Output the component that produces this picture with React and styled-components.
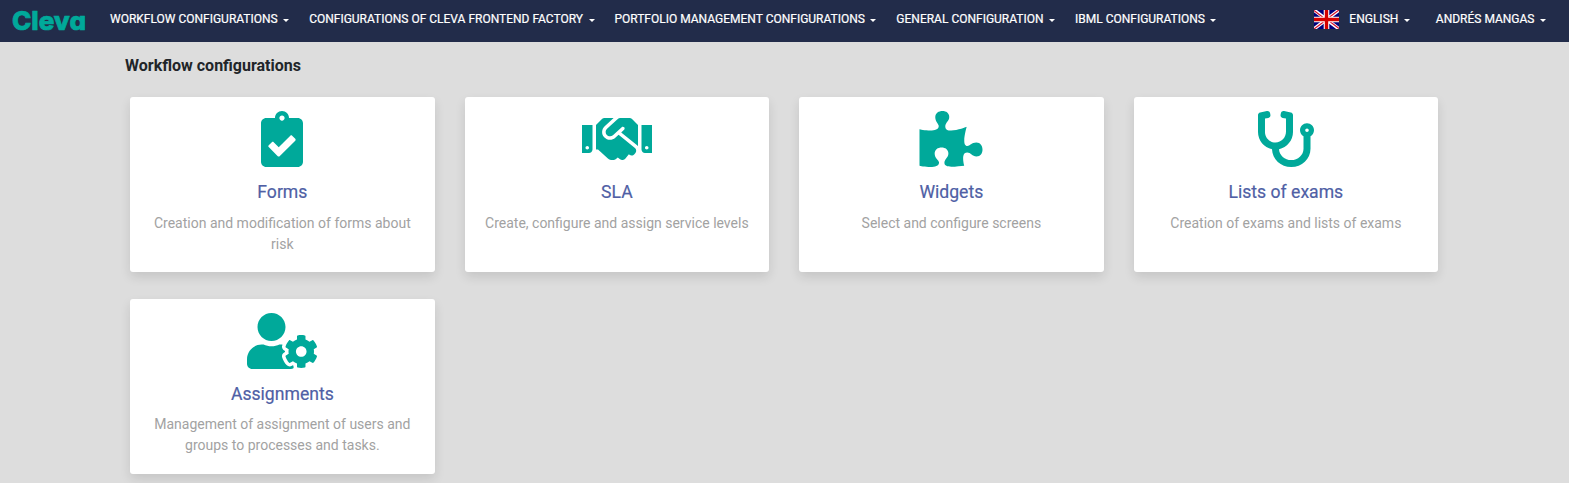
import React from "react";
import styled, { createGlobalStyle } from "styled-components";
import {
  FaClipboardCheck,
  FaHandshake,
  FaPuzzlePiece,
  FaStethoscope,
  FaUserCog,
} from "react-icons/fa";

const GlobalStyle = createGlobalStyle`
  * { box-sizing: border-box; }
  body {
    margin: 0;
    min-height: 100vh;
    background: #dddddd;
    color: #212529;
    font-family: Roboto, "Liberation Sans", sans-serif;
  }
`;

const Navbar = styled.nav`
  display: flex;
  align-items: center;
  height: 42px;
  padding: 0 23px 0 12px;
  background: #222c4a;
`;

const Logo = styled.svg`
  display: block;
  flex: none;
  width: 78px;
  height: 36px;
  margin-right: 20px;
  overflow: visible;
`;

const LogoText = styled.text`
  font-family: Inter, "Liberation Sans", sans-serif;
  font-size: 26px;
  font-weight: 800;
  font-feature-settings: "cv11";
  fill: #00a99a;
  stroke: #00a99a;
  stroke-width: 0.7px;
`;

const Menu = styled.div`
  display: flex;
  gap: ${(p) => p.$gap};
  margin-left: ${(p) => (p.$end ? "auto" : "0")};
`;

const MenuItem = styled.a`
  display: flex;
  align-items: center;
  height: 20px;
  margin-top: -4px;
  color: #fff;
  font-size: 12px;
  font-weight: 400;
  line-height: 20px;
  white-space: nowrap;
  -webkit-text-stroke: 0.2px #fff;

  &::after {
    content: "";
    margin: 3px 0 0 5.5px;
    border: 3px solid transparent;
    border-top-color: #fff;
    border-bottom: 0;
  }
`;

const Flag = styled.svg`
  display: block;
  width: 25px;
  height: 19px;
  margin-right: 10px;
`;

const Content = styled.main`
  padding: 14px 130.8px 0 125px;
`;

const Heading = styled.h1`
  margin: 0;
  font-size: 16px;
  font-weight: 700;
  line-height: 20px;
`;

const CardGrid = styled.section`
  display: grid;
  grid-template-columns: repeat(4, 1fr);
  gap: 26.6px 29.8px;
  padding: 21px 0 0 5px;
`;

const Card = styled.article`
  display: flex;
  flex-direction: column;
  align-items: center;
  height: 175px;
  padding: 14px 20px 0;
  background: #fff;
  border-radius: 3px;
  box-shadow: 0 5px 11px rgba(0, 0, 0, 0.11);
  text-align: center;

  svg {
    width: 70px;
    height: 56px;
    color: #00a99a;
  }
`;

const CardTitle = styled.h2`
  margin: 13px 0 0;
  color: #4f5fa5;
  font-size: 17.6px;
  font-weight: 400;
  line-height: 24px;
  -webkit-text-stroke: 0.2px #4f5fa5;
`;

const CardText = styled.p`
  margin: 8.8px 0 0;
  color: #a2a2a2;
  font-size: 14px;
  line-height: 21px;
`;

const menus = [
  "WORKFLOW CONFIGURATIONS",
  "CONFIGURATIONS OF CLEVA FRONTEND FACTORY",
  "PORTFOLIO MANAGEMENT CONFIGURATIONS",
  "GENERAL CONFIGURATION",
  "IBML CONFIGURATIONS",
];

const cards = [
  { icon: FaClipboardCheck, title: "Forms", text: "Creation and modification of forms about risk" },
  { icon: FaHandshake, title: "SLA", text: "Create, configure and assign service levels" },
  { icon: FaPuzzlePiece, title: "Widgets", text: "Select and configure screens" },
  { icon: FaStethoscope, title: "Lists of exams", text: "Creation of exams and lists of exams" },
  { icon: FaUserCog, title: "Assignments", text: "Management of assignment of users and groups to processes and tasks." },
];

function BritishFlag() {
  return (
    <Flag viewBox="0 0 25 19" aria-hidden="true">
      <rect width="25" height="19" fill="#00007c" />
      <path d="M0 0L25 19M25 0L0 19" stroke="#fff" strokeWidth="3.4" />
      <path d="M0 0.6L12.5 10M12.5 9L25 18.4M25 0L12.5 9.2M12.5 9.8L0 19" stroke="#d8102c" strokeWidth="1.2" />
      <path d="M12.5 0V19M0 9.5H25" stroke="#fff" strokeWidth="5.6" />
      <path d="M12.5 0V19M0 9.5H25" stroke="#d40000" strokeWidth="3.4" />
    </Flag>
  );
}

export default function App() {
  return (
    <>
      <GlobalStyle />
      <Navbar>
        <Logo viewBox="0 0 78 36" role="img" aria-label="Cleva">
          <LogoText x="0" y="26.5" textLength="74" lengthAdjust="spacingAndGlyphs">
            Cleva
          </LogoText>
        </Logo>
        <Menu $gap="19.9px">
          {menus.map((label) => (
            <MenuItem key={label}>{label}</MenuItem>
          ))}
        </Menu>
        <Menu $gap="26px" $end>
          <MenuItem>
            <BritishFlag />
            ENGLISH
          </MenuItem>
          <MenuItem>ANDRÉS MANGAS</MenuItem>
        </Menu>
      </Navbar>
      <Content>
        <Heading>Workflow configurations</Heading>
        <CardGrid>
          {cards.map(({ icon: Icon, title, text }) => (
            <Card key={title}>
              <Icon />
              <CardTitle>{title}</CardTitle>
              <CardText>{text}</CardText>
            </Card>
          ))}
        </CardGrid>
      </Content>
    </>
  );
}
